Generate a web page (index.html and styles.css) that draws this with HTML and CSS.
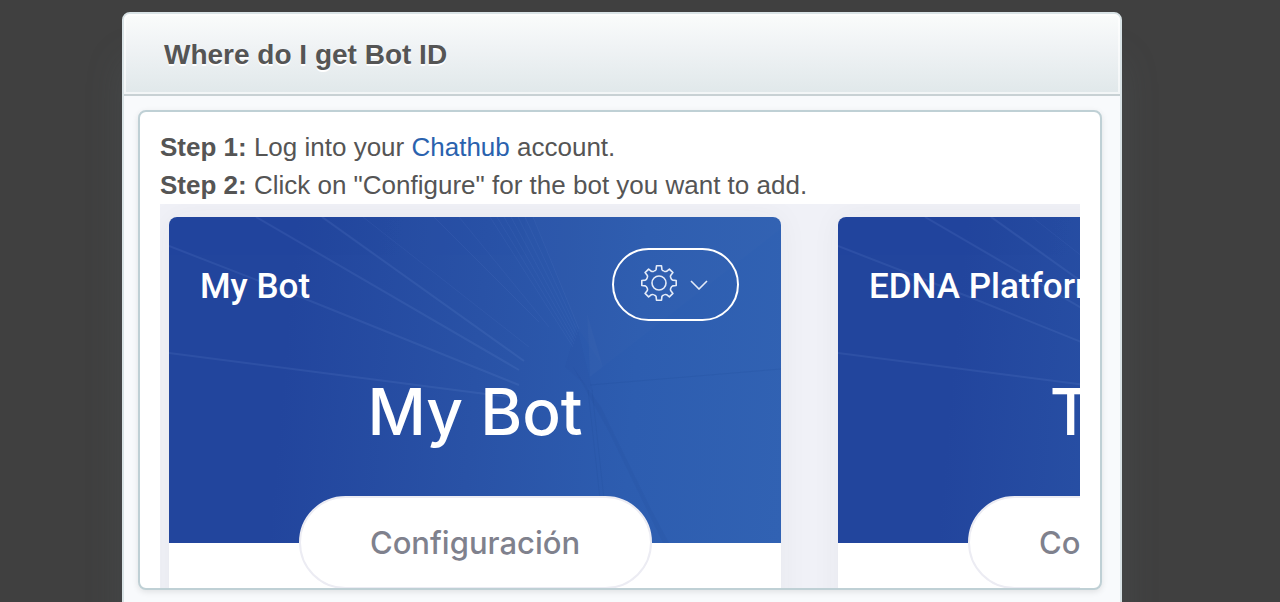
FILE: index.html
```html
<!DOCTYPE html>
<html lang="en">
<head>
  <meta charset="UTF-8">
  <title>Where do I get Bot ID</title>
  <link rel="stylesheet" href="styles.css">
</head>
<body>
  <!-- shared drawings -->
  <svg class="defs" width="0" height="0" aria-hidden="true">
    <symbol id="rays" viewBox="0 0 612 326" preserveAspectRatio="none">
      <path d="M434 150L612 12V0H364L408 110z" fill="#fff" opacity=".01"/>
      <path d="M404 150L432 190L482 292L500 326H494L440 215z" fill="#16387f" opacity=".07"/>
      <path d="M418 96L434 150L421 160z" fill="#fff" opacity=".02"/>
      <path d="M408 110L424 175L396 150z" fill="#16387f" opacity=".04"/>
      <g fill="none" stroke="#8fb0ee" stroke-width="2" opacity=".1">
        <path d="M0 29L134 81L350 168"/>
        <path d="M87 0L350 153"/>
        <path d="M153 0L355 144"/>
        <path d="M0 136L340 180"/>
      </g>
      <g fill="none" stroke="#8fb0ee" opacity=".07">
        <path d="M194 0L360 130M265 0L370 105M290 0L380 110M321 0L404 130M328 0L405 127M335 0L406 124M342 0L407 121M349 0L408 118M356 0L409 115M364 0L410 112"/>
      </g>
      <path d="M419 173L431 282M423 173L435 282M421 168L612 152" fill="none" stroke="#16387f" opacity=".1"/>
    </symbol>
    <symbol id="gear" viewBox="-19 -19 38 38">
      <g fill="none" stroke="#e4ebf8" stroke-width="1.6" stroke-linejoin="round">
        <circle r="7"/>
        <path id="tooth" d="M-4.9 -11.9Q-3.3 -12.4 -2.9 -13.6L-2.5 -17.2H2.5L2.9 -13.6Q3.3 -12.4 4.9 -11.9"/>
        <use href="#tooth" transform="rotate(45)"/>
        <use href="#tooth" transform="rotate(90)"/>
        <use href="#tooth" transform="rotate(135)"/>
        <use href="#tooth" transform="rotate(180)"/>
        <use href="#tooth" transform="rotate(225)"/>
        <use href="#tooth" transform="rotate(270)"/>
        <use href="#tooth" transform="rotate(315)"/>
      </g>
    </symbol>
  </svg>

  <div class="dialog">
    <div class="dialog-header">
      <h1>Where do I get Bot ID</h1>
    </div>
    <div class="panel">
      <p><strong>Step 1:</strong> Log into your <a href="#">Chathub</a> account.</p>
      <p><strong>Step 2:</strong> Click on "Configure" for the bot you want to add.</p>

      <div class="bots">
        <div class="card">
          <div class="hero">
            <svg class="rays"><use href="#rays"/></svg>
            <div class="hero-top">
              <h2>My Bot</h2>
              <button class="settings" type="button" aria-label="Settings">
                <svg width="38" height="38"><use href="#gear"/></svg>
                <svg width="18" height="14" viewBox="0 0 18 14"><path d="M1 5L9 13L17 5" fill="none" stroke="#e4ebf8" stroke-width="1.6"/></svg>
              </button>
            </div>
            <div class="bot-name">My Bot</div>
          </div>
          <button class="configure" type="button">Configuración</button>
        </div>

        <div class="card">
          <div class="hero">
            <svg class="rays"><use href="#rays"/></svg>
            <div class="hero-top">
              <h2>EDNA Platform</h2>
            </div>
            <div class="bot-name">Ticket</div>
          </div>
          <button class="configure" type="button">Configuración</button>
        </div>
      </div>
    </div>
  </div>
</body>
</html>
```
FILE: styles.css
```css
* {
  box-sizing: border-box;
}
body {
  margin: 0;
  padding: 12px 36px 0 0;
  height: 100vh;
  overflow: hidden;
  background: #404040;
  color: #555;
  font-family: "Liberation Sans", Arial, sans-serif;
}
h1, h2, p {
  margin: 0;
}
.defs {
  position: absolute;
}
.dialog {
  max-width: 1000px;
  height: 100vh;
  margin: 0 auto;
  border: 2px solid #d9e3e6;
  border-radius: 8px;
  background: #f8fafc;
  box-shadow: 0 48px 36px rgba(90, 105, 110, 0.22);
}
.dialog-header {
  height: 82px;
  padding: 2px 40px 0;
  display: flex;
  align-items: center;
  border-bottom: 2px solid #c8d1d4;
  border-radius: 6px 6px 0 0;
  background: linear-gradient(#fafcfb, #f0f3f5 40%, #e0e8ea);
  box-shadow: inset 0 0 0 2px rgba(255, 255, 255, 0.6);
}
.dialog-header h1 {
  font-size: 28px;
  line-height: 36px;
  text-shadow: 0 2px 0 #fff;
}
.panel {
  height: calc(100vh - 122px);
  margin: 14px 18px 0 14px;
  padding: 16px 20px 0;
  overflow: hidden;
  border: 2px solid #bfd0d5;
  border-radius: 8px;
  background: #fff;
  box-shadow: 0 2px 6px rgba(0, 0, 0, 0.1);
}
.panel p {
  font-size: 26px;
  line-height: 38px;
}
.panel a {
  color: #2a62ae;
  text-decoration: none;
}

/* bot list */
.bots {
  display: flex;
  gap: 57px;
  padding: 13px 9px 0;
  overflow: hidden;
  background: #f0f1f7;
}
.card {
  flex: 0 0 612px;
  height: 460px;
  overflow: hidden;
  border-radius: 8px;
  background: #fff;
  box-shadow: 0 0 30px rgba(60, 60, 60, 0.05);
}
.hero {
  position: relative;
  height: 326px;
  padding: 31px 42px 0 31px;
  background: linear-gradient(95deg, #22459d 20%, #2952a6 50%, #2d5db0 75%, #3162b3);
  color: #fff;
}
.rays {
  position: absolute;
  inset: 0;
  width: 100%;
  height: 100%;
}
.hero-top {
  position: relative;
  display: flex;
  justify-content: space-between;
  align-items: center;
  height: 73px;
}
.hero-top h2 {
  padding-top: 4px;
  font: 500 35px/44px Roboto, sans-serif;
}
.settings {
  display: flex;
  align-items: center;
  justify-content: center;
  gap: 12px;
  width: 127px;
  height: 73px;
  padding: 0 4px 3px 0;
  border: 2px solid #fff;
  border-radius: 37px;
  background: none;
}
.bot-name {
  position: relative;
  margin: 51px -42px 0 -31px;
  font: 500 64px/80px Inter, sans-serif;
  text-align: center;
}
.configure {
  display: block;
  position: relative;
  width: 353px;
  height: 93px;
  margin: -47px auto 0;
  border: 2px solid #ececf3;
  border-radius: 47px;
  background: #fff;
  color: #7f818d;
  font: 500 31px/40px Inter, sans-serif;
}
```
